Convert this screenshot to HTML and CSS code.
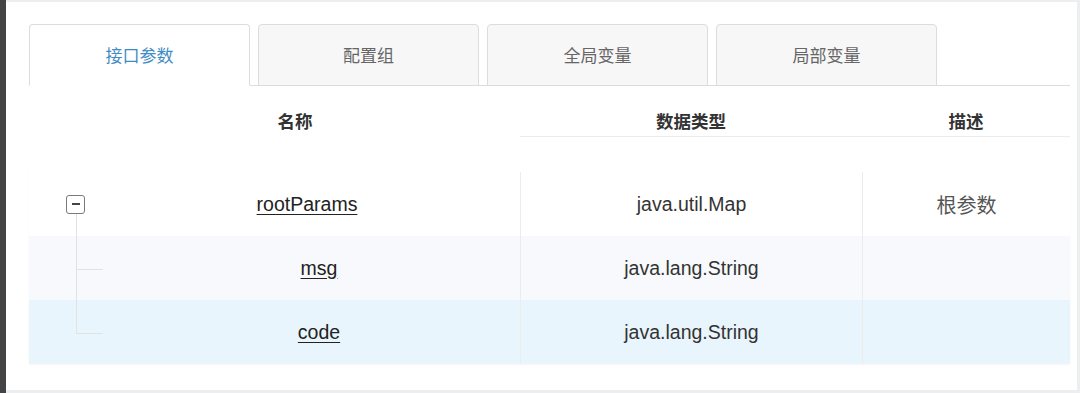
FILE: index.html
```html
<!DOCTYPE html>
<html>
<head>
    <title>接口参数</title>
    <link rel="stylesheet" href="styles.css">
</head>
<body>
    <div class="panel">
        <div class="tabs">
            <div class="tab active">接口参数</div>
            <div class="tab">配置组</div>
            <div class="tab">全局变量</div>
            <div class="tab">局部变量</div>
        </div>

        <div class="thead">
            <div class="th col-name">名称</div>
            <div class="th col-type">数据类型</div>
            <div class="th col-desc">描述</div>
        </div>

        <div class="tbody">
            <div class="tr">
                <div class="td col-name">
                    <span class="guide root"><span class="toggle"></span></span>
                    <span class="name root-name">rootParams</span>
                </div>
                <div class="td col-type">java.util.Map</div>
                <div class="td col-desc">根参数</div>
            </div>
            <div class="tr striped">
                <div class="td col-name">
                    <span class="guide branch"></span>
                    <span class="name child-name">msg</span>
                </div>
                <div class="td col-type">java.lang.String</div>
                <div class="td col-desc"></div>
            </div>
            <div class="tr selected">
                <div class="td col-name">
                    <span class="guide branch last"></span>
                    <span class="name child-name">code</span>
                </div>
                <div class="td col-type">java.lang.String</div>
                <div class="td col-desc"></div>
            </div>
        </div>
    </div>
</body>
</html>
```

FILE: styles.css
```css
html, body {
    margin: 0;
    height: 393px;
    overflow: hidden;
}
body {
    font-family: "Liberation Sans", "Noto Sans CJK SC", sans-serif;
    background: #eceef0;
    border-left: 6px solid #444;
}
.panel {
    margin: 2px 3px 0 0;
    height: 388px;
    background: #fff;
    padding: 22px 7px 0 23px;
    box-sizing: border-box;
}
.tabs {
    display: flex;
    gap: 8px;
    height: 62px;
    box-sizing: border-box;
    border-bottom: 1px solid #dcdcdc;
}
.tab {
    width: 221px;
    height: 62px;
    box-sizing: border-box;
    border: 1px solid #dcdcdc;
    border-radius: 4px 4px 0 0;
    background: #f7f7f7;
    color: #666;
    font-size: 17px;
    display: flex;
    align-items: center;
    justify-content: center;
    padding-bottom: 2px;
}
.tab.active {
    background: #fff;
    color: #3f8cc4;
    border-bottom-color: #fff;
}

/* table */
.thead, .tr {
    display: flex;
}
.col-name { width: 491px; }
.col-type { width: 342px; }
.col-desc { width: 208px; }
.thead {
    margin-top: 23px;
}
.th {
    height: 28px;
    box-sizing: border-box;
    font-size: 17.5px;
    font-weight: bold;
    color: #333;
    text-align: center;
    line-height: 26px;
}
.th.col-name {
    padding-left: 41px;
}
.th.col-type, .th.col-desc {
    border-bottom: 1px solid #ececec;
}
.tbody {
    margin-top: 35px;
    box-shadow: 0 1px 2px rgba(0,0,0,0.04);
}
.tr {
    height: 64px;
}
.tr.striped { background: #f7f9fc; }
.tr.selected { background: #e9f5fc; }
.td {
    display: flex;
    align-items: center;
    justify-content: center;
    box-sizing: border-box;
    font-size: 19.5px;
    color: #333;
}
.td.col-type, .td.col-desc {
    border-left: 1px solid #ececec;
}
.td.col-desc {
    font-size: 20px;
    color: #555;
}
.td.col-name {
    justify-content: flex-start;
}

/* tree */
.guide {
    align-self: stretch;
    display: flex;
    align-items: center;
}
.guide.root {
    width: 19px;
    margin-left: 37px;
    background: linear-gradient(#e2e2e2, #e2e2e2) 10px 100% / 1px 50% no-repeat;
}
.guide.branch {
    width: 27px;
    margin-left: 47px;
    background:
        linear-gradient(#e2e2e2, #e2e2e2) 0 0 / 1px 100% no-repeat,
        linear-gradient(#e2e2e2, #e2e2e2) 0 52% / 100% 1px no-repeat;
}
.guide.branch.last {
    background:
        linear-gradient(#e2e2e2, #e2e2e2) 0 0 / 1px 52% no-repeat,
        linear-gradient(#e2e2e2, #e2e2e2) 0 52% / 100% 1px no-repeat;
}
.toggle {
    width: 19px;
    height: 19px;
    box-sizing: border-box;
    border: 1.5px solid #7a7a7a;
    border-radius: 3px;
    background: #fff linear-gradient(#444, #444) center / 8px 2px no-repeat;
}
.name {
    flex: 1;
    text-align: center;
    text-decoration: underline;
    text-underline-offset: 3px;
    color: #222;
}
.root-name { margin-left: 9px; }
.child-name { margin-left: 15px; }
```
